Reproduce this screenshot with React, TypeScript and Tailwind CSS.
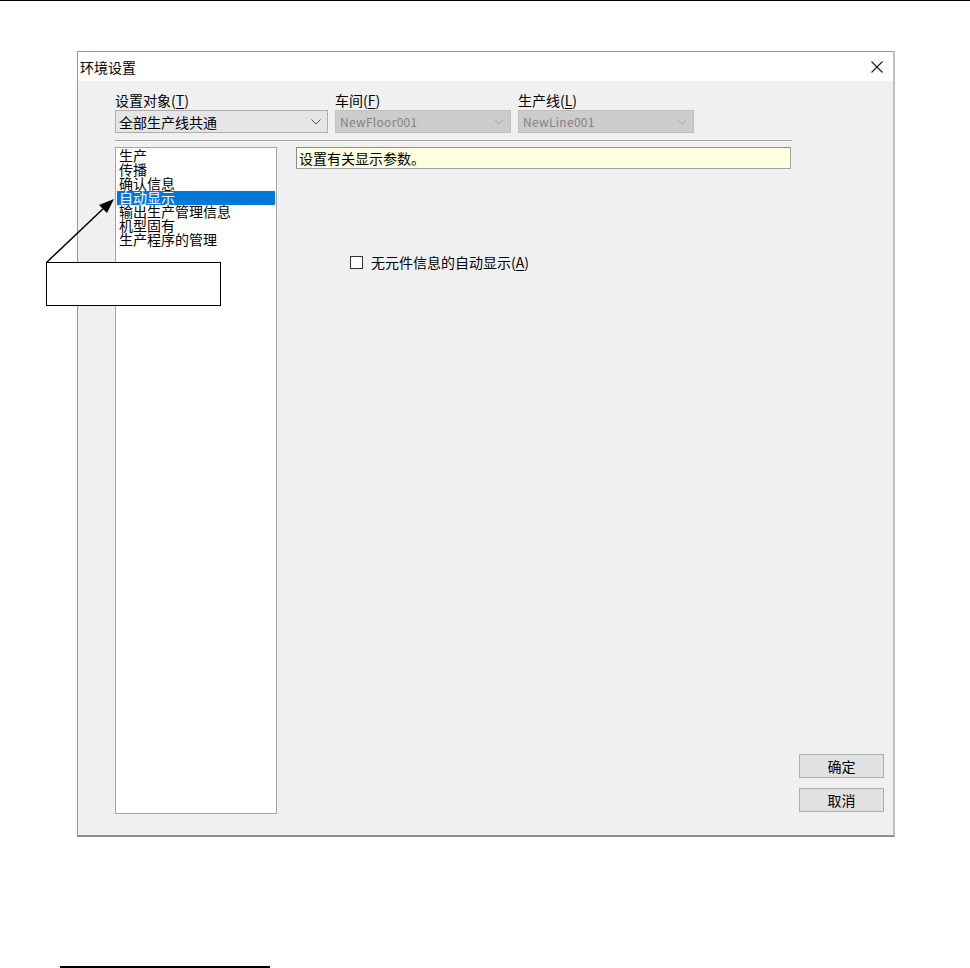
import React from "react";

const font = { fontFamily: '"Noto Sans CJK SC", "Noto Sans", sans-serif' };

function Chevron({ color }: { color: string }) {
  return (
    <svg width="10" height="6" viewBox="0 0 10 6" className="shrink-0">
      <polyline points="0.5,0.5 5,5 9.5,0.5" fill="none" stroke={color} strokeWidth="1" />
    </svg>
  );
}

function Label({ text, acc }: { text: string; acc: string }) {
  return (
    <div className="h-[18px] text-[14px] leading-[16px] text-black">
      {text}(<span className="underline underline-offset-2">{acc}</span>)
    </div>
  );
}

export default function App() {
  const items = ["生产", "传播", "确认信息", "自动显示", "输出生产管理信息", "机型固有", "生产程序的管理"];
  return (
    <div className="relative w-[970px] h-[968px] bg-white overflow-hidden" style={font}>
      <div className="h-[1px] w-full bg-black" />
      {/* dialog */}
      <div className="ml-[77px] mt-[50px] w-[818px] h-[786px] border border-[#9a9890] border-r-[2px] border-b-[2px] border-r-[#c2bfb8] border-b-[#8f8c84] flex flex-col">
        <div className="h-[29px] bg-white flex items-center justify-between pl-[2px] pr-[10px]">
          <span className="text-[14px] leading-[16px] text-black mt-[1px]">环境设置</span>
          <svg width="12" height="12" viewBox="0 0 12 12">
            <line x1="0.5" y1="0.5" x2="11.5" y2="11.5" stroke="#1a1a1a" strokeWidth="1.1" />
            <line x1="11.5" y1="0.5" x2="0.5" y2="11.5" stroke="#1a1a1a" strokeWidth="1.1" />
          </svg>
        </div>
        <div className="flex-1 bg-[#f0f0f0] pl-[37px] pt-[11px] flex flex-col">
          <div className="flex gap-[7px]">
            <div className="w-[213px] flex flex-col">
              <Label text="设置对象" acc="T" />
              <div className="h-[23px] bg-[#e5e5e5] border border-[#adadad] flex items-center justify-between pl-[3px] pr-[6px]">
                <span className="text-[14px] leading-[16px] text-black">全部生产线共通</span>
                <Chevron color="#555555" />
              </div>
            </div>
            <div className="w-[176px] flex flex-col">
              <Label text="车间" acc="F" />
              <div className="h-[23px] bg-[#cccccc] border border-[#bfbfbf] flex items-center justify-between pl-[4px] pr-[6px]">
                <span className="text-[12px] leading-[16px] text-[#838383] tracking-[0.3px]">NewFloor001</span>
                <Chevron color="#a8a8a8" />
              </div>
            </div>
            <div className="w-[176px] flex flex-col">
              <Label text="生产线" acc="L" />
              <div className="h-[23px] bg-[#cccccc] border border-[#bfbfbf] flex items-center justify-between pl-[4px] pr-[6px]">
                <span className="text-[12px] leading-[16px] text-[#838383] tracking-[0.3px]">NewLine001</span>
                <Chevron color="#a8a8a8" />
              </div>
            </div>
          </div>
          <div className="mt-[7px] w-[677px] h-[1px] bg-[#a0a0a0]" />
          <div className="w-[677px] h-[1px] bg-white" />
          <div className="mt-[5px] flex flex-1 pb-[21px]">
            <div className="w-[162px] h-[667px] bg-white border border-[#a0a4ab] p-[1px] flex flex-col">
              {items.map((it, i) => (
                <div
                  key={it}
                  className={
                    "h-[14px] text-[14px] leading-[13px] pl-[2px] whitespace-nowrap overflow-visible " +
                    (i === 3 ? "bg-[#0078d7] text-white" : "text-black")
                  }
                >
                  {it}
                </div>
              ))}
            </div>
            <div className="ml-[19px] w-[495px] flex flex-col">
              <div className="h-[22px] bg-[#ffffe1] border border-[#a0a0a0] border-t-[#8c8c8c] border-l-[#8c8c8c] flex items-center pl-[2px]">
                <span className="text-[14px] leading-[16px] text-black">设置有关显示参数。</span>
              </div>
              <div className="mt-[85px] ml-[54px] flex items-center">
                <div className="w-[13px] h-[13px] bg-white border border-[#333333]" />
                <span className="ml-[8px] text-[14px] leading-[16px] text-black">
                  无元件信息的自动显示(<span className="underline underline-offset-2">A</span>)
                </span>
              </div>
            </div>
            <div className="ml-[8px] w-[85px] flex flex-col justify-end pb-[2px] gap-[10px]">
              <div className="h-[24px] bg-[#e1e1e1] border border-[#adadad] flex items-center justify-center text-[14px] leading-[16px] text-black">
                确定
              </div>
              <div className="h-[24px] bg-[#e1e1e1] border border-[#adadad] flex items-center justify-center text-[14px] leading-[16px] text-black">
                取消
              </div>
            </div>
          </div>
        </div>
      </div>
      {/* footnote rule */}
      <div className="mt-[129px] ml-[60px] w-[210px] h-[2px] bg-black" />

      {/* callout overlay */}
      <div className="absolute left-[46px] top-[262px] w-[175px] h-[44px] bg-white border-[1.5px] border-black" />
      <svg className="absolute left-0 top-0 pointer-events-none" width="970" height="968">
        <line x1="47" y1="262" x2="105" y2="207" stroke="black" strokeWidth="1.5" />
        <polygon points="114,199 99,205 107,213" fill="black" />
      </svg>
    </div>
  );
}
